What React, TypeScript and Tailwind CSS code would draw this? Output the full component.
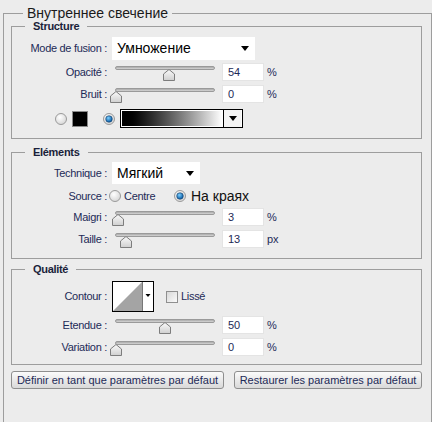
import React from "react";

const font = "font-['Liberation_Sans',Arial,sans-serif]";

function Arrow({ className = "" }: { className?: string }) {
  return (
    <svg width="8" height="5" viewBox="0 0 8 5" className={className}>
      <polygon points="0,0 8,0 4,5" fill="#000" />
    </svg>
  );
}

function Thumb() {
  return (
    <svg width="12" height="12" viewBox="0 0 12 12">
      <defs>
        <linearGradient id="tg" x1="0" y1="0" x2="0" y2="1">
          <stop offset="0" stopColor="#fbfbfb" />
          <stop offset="1" stopColor="#cfcfcf" />
        </linearGradient>
      </defs>
      <polygon points="0.5,11.5 0.5,5 6,0.5 11.5,5 11.5,11.5" fill="url(#tg)" stroke="#7d7d7d" />
    </svg>
  );
}

function Slider({ pos }: { pos: number }) {
  return (
    <div className="relative h-[18px] w-[103px]">
      <div className="ml-[3px] mt-[5px] h-[4px] w-[100px] rounded-full border border-[#9a9a9a] bg-gradient-to-b from-[#a9a9a9] to-[#d6d6d6]" />
      <div className="absolute top-[3px]" style={{ left: pos }}>
        <Thumb />
      </div>
    </div>
  );
}

function Radio({ on }: { on?: boolean }) {
  return (
    <svg width="12" height="12" viewBox="0 0 12 12">
      <defs>
        <radialGradient id="rg" cx="0.4" cy="0.35" r="0.7">
          <stop offset="0" stopColor="#ffffff" />
          <stop offset="1" stopColor="#d4d4d4" />
        </radialGradient>
        <radialGradient id="rb" cx="0.4" cy="0.35" r="0.6">
          <stop offset="0" stopColor="#7fd0ff" />
          <stop offset="1" stopColor="#0a5fa8" />
        </radialGradient>
      </defs>
      <circle cx="6" cy="6" r="5.5" fill="url(#rg)" stroke="#9a9a9a" />
      {on && <circle cx="6" cy="6" r="3.3" fill="url(#rb)" stroke="#1b3f66" strokeWidth="0.6" />}
    </svg>
  );
}

function Label({ children }: { children: React.ReactNode }) {
  return (
    <div className="w-[95px] shrink-0 text-right text-[11px] tracking-[-0.3px] text-[#1d2a57]">
      {children}
    </div>
  );
}

function SliderRow({ label, pos, value, unit, className = "" }: { label: string; pos: number; value: string; unit: string; className?: string }) {
  return (
    <div className={`flex h-[18px] items-center ${className}`}>
      <Label>{label}</Label>
      <div className="ml-[5px]">
        <Slider pos={pos} />
      </div>
      <div className="ml-[7px] flex h-[18px] w-[42px] items-center border border-[#e4e4e4] bg-white pl-[5px] text-[11px] text-[#1d2a57]">
        {value}
      </div>
      <span className="ml-[3px] text-[11px] text-[#1d2a57]">{unit}</span>
    </div>
  );
}

function Group({ title, className = "", children }: { title: string; className?: string; children: React.ReactNode }) {
  return (
    <fieldset className={`w-[411px] border border-[#9d9d9d] ${className}`}>
      <legend className="ml-[13px] px-[8px] text-[11px] leading-[12px] font-bold tracking-[-0.3px] text-[#1a1f3a]">
        {title}
      </legend>
      {children}
    </fieldset>
  );
}

function Button({ children, className = "" }: { children: React.ReactNode; className?: string }) {
  return (
    <div className={`flex h-[18px] items-center justify-center rounded-[3px] border border-[#8e8e8e] bg-gradient-to-b from-[#fbfbfb] to-[#d9d9d9] text-[11px] text-[#1d2a57] ${className}`}>
      {children}
    </div>
  );
}

export default function App() {
  return (
    <div className={`h-[422px] w-[432px] overflow-hidden bg-[#ececec] ${font}`}>
      <fieldset className="ml-[3px] mt-[4px] h-[430px] w-[429px] border border-[#9d9d9d] pl-[7px]">
        <legend className="ml-[12px] px-[4px] text-[14px] leading-[18px] text-[#1a1a1a]">
          Внутреннее свечение
        </legend>

        <Group title="Structure" className="-mt-[2px] pb-[10px]">
          <div className="mt-[5px] flex h-[23px] items-center">
            <Label>Mode de fusion :</Label>
            <div className="ml-[5px] flex h-[23px] w-[143px] items-center justify-between bg-white pl-[5px] pr-[6px] text-[14px] text-black">
              Умножение
              <Arrow />
            </div>
          </div>
          <SliderRow label="Opacité :" pos={51} value="54" unit="%" className="mt-[3px]" />
          <SliderRow label="Bruit :" pos={-2} value="0" unit="%" className="mt-[4px]" />
          <div className="mt-[6px] flex h-[19px] items-center pl-[43px]">
            <Radio />
            <div className="ml-[5px] h-[16px] w-[16px] border border-[#8a8a8a] bg-black" />
            <div className="ml-[15px]">
              <Radio on />
            </div>
            <div className="ml-[5px] flex h-[19px] w-[123px] border border-black bg-white p-[1px]">
              <div className="h-full flex-1 bg-gradient-to-r from-black to-white" />
              <div className="-my-[1px] ml-[1px] flex w-[18px] items-center justify-center border-l border-black bg-[#f4f4f4]">
                <Arrow />
              </div>
            </div>
          </div>
        </Group>

        <Group title="Eléments" className="mt-[7px] pb-[10px]">
          <div className="mt-[4px] flex h-[22px] items-center">
            <Label>Technique :</Label>
            <div className="ml-[5px] flex h-[22px] w-[88px] items-center justify-between bg-white pl-[5px] pr-[6px] text-[14px] text-black">
              Мягкий
              <Arrow />
            </div>
          </div>
          <div className="mt-[3px] flex h-[18px] items-center">
            <Label>Source :</Label>
            <div className="ml-[2px]">
              <Radio />
            </div>
            <span className="ml-[3px] w-[50px] text-[11px] tracking-[-0.3px] text-[#1d2a57]">Centre</span>
            <Radio on />
            <span className="ml-[5px] text-[14px] text-[#111]">На краях</span>
          </div>
          <SliderRow label="Maigri :" pos={0} value="3" unit="%" className="mt-[3px]" />
          <SliderRow label="Taille :" pos={8} value="13" unit="px" className="mt-[4px]" />
        </Group>

        <Group title="Qualité" className="mt-[4px] pb-[8px]">
          <div className="mt-[6px] flex h-[31px] items-center">
            <Label>Contour :</Label>
            <svg width="42" height="31" viewBox="0 0 42 31" className="ml-[5px]">
              <rect x="0.5" y="0.5" width="41" height="30" fill="#fff" stroke="#000" />
              <polygon points="1,30 30,1 30,30" fill="#a4a4a4" />
              <line x1="30.5" y1="1" x2="30.5" y2="30" stroke="#777" />
              <polygon points="33.5,13 38.5,13 36,16" fill="#000" />
            </svg>
            <div className="ml-[12px] h-[12px] w-[12px] border border-[#8f8f8f] bg-gradient-to-br from-[#d8d8d8] to-[#fafafa]" />
            <span className="ml-[3px] text-[11px] tracking-[-0.3px] text-[#1d2a57]">Lissé</span>
          </div>
          <SliderRow label="Etendue :" pos={47} value="50" unit="%" className="mt-[4px]" />
          <SliderRow label="Variation :" pos={-2} value="0" unit="%" className="mt-[4px]" />
        </Group>

        <div className="mt-[6px] flex w-[411px] gap-[10px]">
          <Button className="w-[213px]">Définir en tant que paramètres par défaut</Button>
          <Button className="w-[188px]">Restaurer les paramètres par défaut</Button>
        </div>
      </fieldset>
    </div>
  );
}
